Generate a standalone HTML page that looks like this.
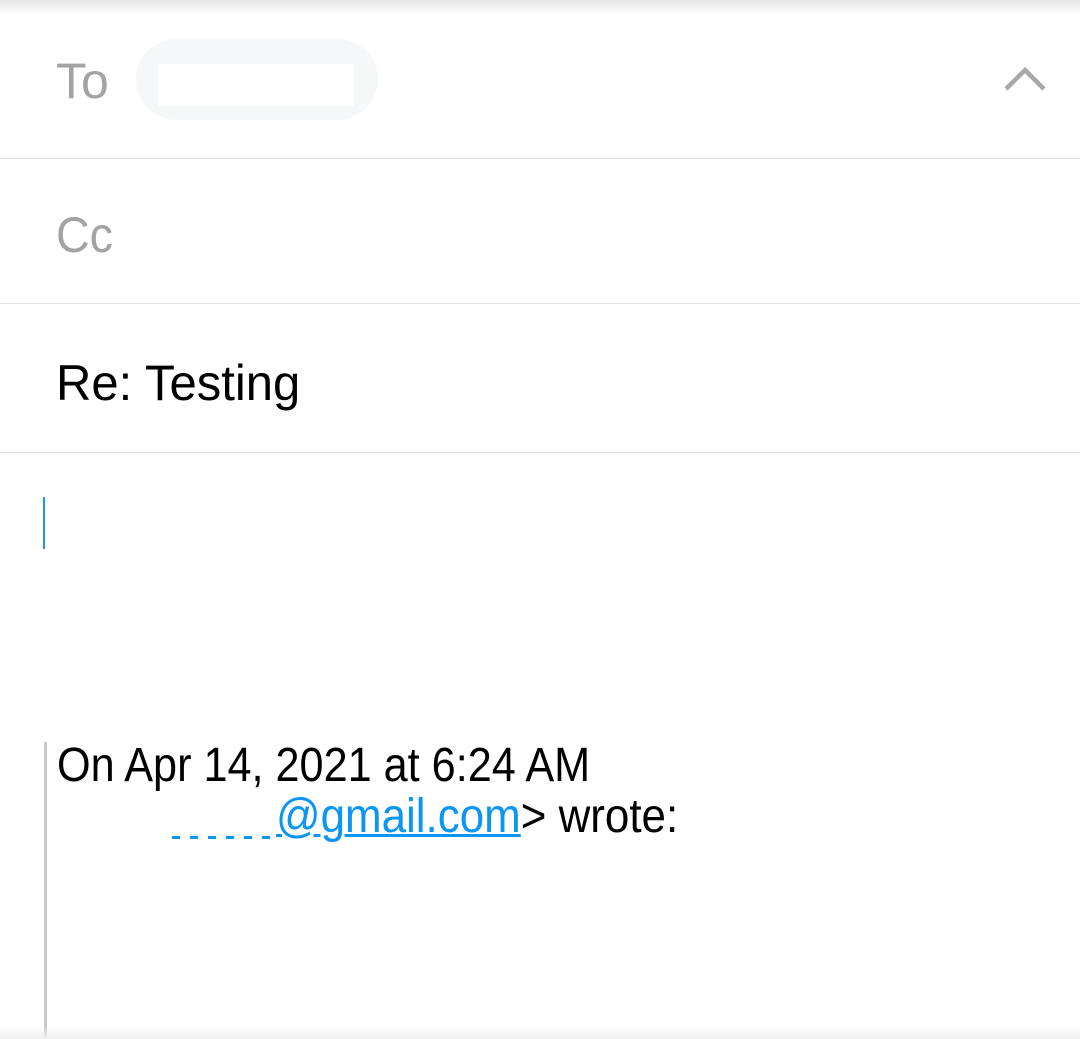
<!DOCTYPE html>
<html><head><meta charset="utf-8"><style>
html,body{margin:0;padding:0;width:1080px;height:1039px;background:#fff;overflow:hidden;position:relative;font-family:"Liberation Sans",sans-serif}
.t{position:absolute;line-height:1;white-space:nowrap;transform-origin:0 0}
.sep{position:absolute;left:0;width:1080px;height:1px;background:#e0e0e0}
</style></head><body>
<div style="position:absolute;left:0;top:0;width:1080px;height:14px;background:linear-gradient(#e6e6e6,#fff)"></div>
<div class="t" style="left:56px;top:56px;font-size:50px;color:#a3a3a3">To</div>
<div style="position:absolute;left:136px;top:39px;width:242px;height:81px;border-radius:41px;background:#f6f7f9"></div>
<div style="position:absolute;left:158px;top:64px;width:196px;height:42px;background:#fff"></div>
<svg style="position:absolute;left:1000px;top:62px" width="50" height="36"><path d="M6 27 L25 8 L44 27" fill="none" stroke="#a8a8a8" stroke-width="4.5"/></svg>
<div class="sep" style="top:158px"></div>
<div class="t" style="left:56px;top:210px;font-size:50px;color:#a3a3a3;transform:scaleX(0.93)">Cc</div>
<div class="sep" style="top:303px"></div>
<div class="t" style="left:56px;top:358px;font-size:50px;color:#000;transform:scaleX(0.98)">Re: Testing</div>
<div class="sep" style="top:452px"></div>
<div style="position:absolute;left:43px;top:497px;width:2px;height:52px;background:#1a96f0"></div>
<div style="position:absolute;left:44px;top:742px;width:3px;height:297px;background:#c8c8c8"></div>
<div class="t" style="left:57px;top:742px;font-size:48px;color:#000;transform:scaleX(0.9)">On Apr 14, 2021 at 6:24 AM</div>
<div class="t" style="left:276px;top:793px;font-size:48px;color:#0b95f5;text-decoration:underline;text-decoration-thickness:3px;transform:scaleX(0.915)">@gmail.com<span style="color:#000;text-decoration:none;display:inline-block">&gt; wrote:</span></div>
<div style="position:absolute;left:172px;top:836px;width:100px;height:3px;background:repeating-linear-gradient(90deg,#0b95f5 0 8px,transparent 8px 18px)"></div>
<div style="position:absolute;left:0;top:1025px;width:1080px;height:14px;background:linear-gradient(rgba(255,255,255,0),#f0f0f0)"></div>
</body></html>
